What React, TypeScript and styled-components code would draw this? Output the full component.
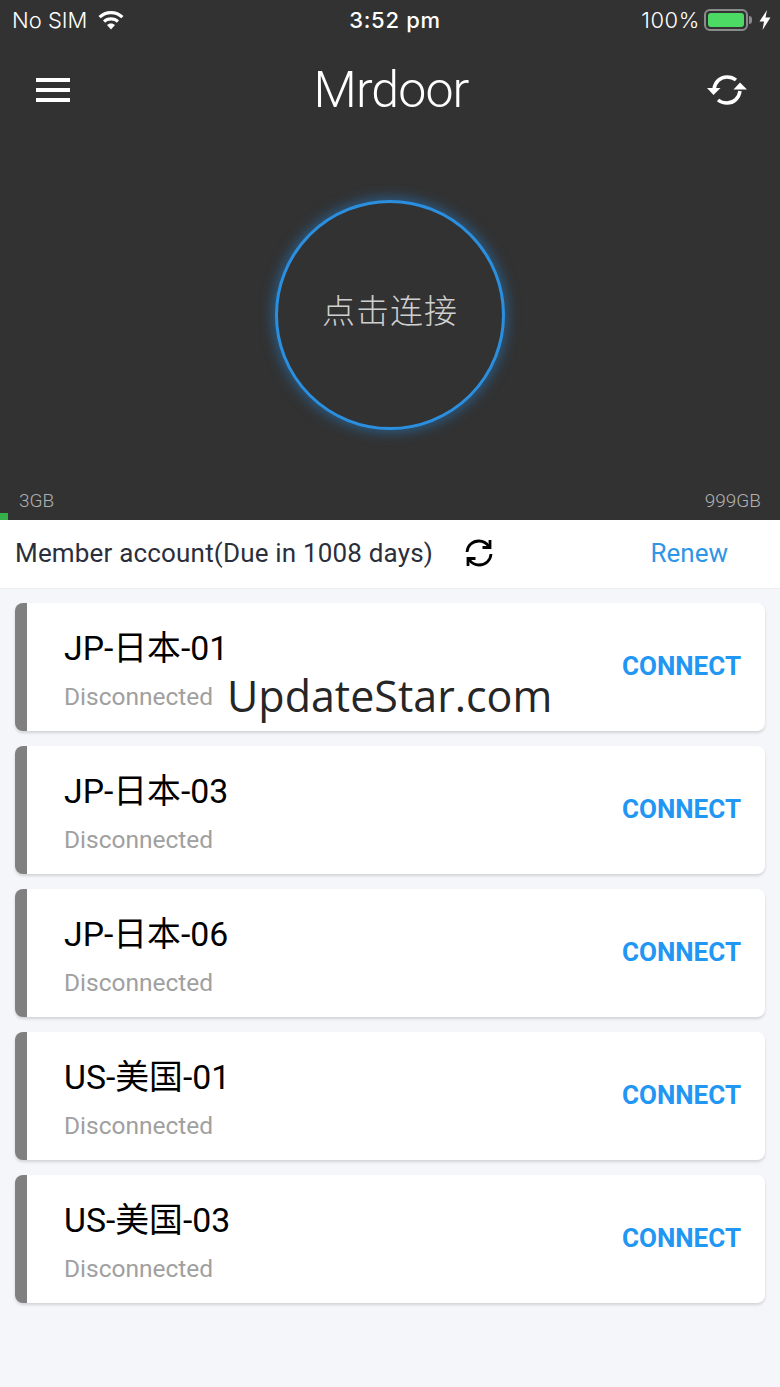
import React from "react";
import styled, { createGlobalStyle } from "styled-components";

const Global = createGlobalStyle`
  html, body { margin: 0; padding: 0; background: #f5f6fa; }
  body { font-family: Roboto, "Noto Sans CJK SC", sans-serif; }
  * { box-sizing: border-box; }
`;

const Page = styled.div`
  position: relative;
  width: 780px;
  height: 1387px;
  overflow: hidden;
  background: #f5f6fa;
  display: flex;
  flex-direction: column;
`;

const Hero = styled.header`
  position: relative;
  height: 520px;
  background: #323232;
  display: flex;
  flex-direction: column;
`;

const StatusBar = styled.div`
  height: 40px;
  padding: 0 9px 0 12px;
  display: grid;
  grid-template-columns: 1fr auto 1fr;
  align-items: center;
  color: #fff;
  font-family: Inter, sans-serif;
  font-size: 22px;
  font-weight: 300;
`;

const StatusLeft = styled.div`
  display: flex;
  align-items: center;
  gap: 11px;
`;

const StatusRight = styled.div`
  display: flex;
  align-items: center;
  justify-content: flex-end;
  gap: 4px;
  letter-spacing: 0.6px;
`;

const Clock = styled.div`
  margin-left: 7px;
  font-weight: 500;
  letter-spacing: 0.7px;
`;

const Battery = styled.div`
  position: relative;
  width: 44px;
  height: 22px;
  border: 2px solid #8b8b8b;
  border-radius: 6px;
  padding: 2px;
  &::after {
    content: "";
    position: absolute;
    right: -6px;
    top: 5px;
    width: 3px;
    height: 8px;
    border-radius: 0 3px 3px 0;
    background: #8b8b8b;
  }
`;

const BatteryFill = styled.div`
  width: 100%;
  height: 100%;
  background: #4cd964;
  border-radius: 3px;
`;

const Bolt = styled.svg`
  margin-left: 7px;
`;

const NavBar = styled.div`
  height: 100px;
  padding: 0 33px 0 36px;
  display: flex;
  align-items: center;
  justify-content: space-between;
`;

const Logo = styled.div`
  margin-left: 5px;
  color: #fff;
  font-family: Roboto, sans-serif;
  font-weight: 300;
  font-size: 50px;
  letter-spacing: -0.9px;
  line-height: 1;
`;

const Burger = styled.div`
  width: 34px;
  display: flex;
  flex-direction: column;
  gap: 6px;
`;

const BurgerLine = styled.span`
  display: block;
  height: 4px;
  background: #fff;
`;

const DialArea = styled.div`
  flex: 1;
  display: flex;
  justify-content: center;
  padding-top: 60px;
`;

const Dial = styled.button`
  width: 230px;
  height: 230px;
  border-radius: 50%;
  border: 3px solid #2b8fe0;
  background: #323232;
  box-shadow: 0 0 13px 2px rgba(33, 140, 230, 0.5);
  color: #cfcfcf;
  font-family: "Noto Sans CJK SC", sans-serif;
  font-weight: 300;
  font-size: 33px;
  letter-spacing: 1px;
  padding: 0 0 12px;
`;

const QuotaRow = styled.div`
  position: absolute;
  left: 19px;
  right: 19px;
  bottom: 9px;
  display: flex;
  justify-content: space-between;
  color: #b0b0b0;
  font-size: 19px;
  font-weight: 300;
  line-height: 20px;
`;

const QuotaBar = styled.div`
  position: absolute;
  left: 0;
  bottom: 0;
  height: 7px;
  background: #35b14a;
`;

const AccountBar = styled.div`
  height: 69px;
  background: #fff;
  border-bottom: 1px solid #eceef2;
  padding: 0 52px 3px 16px;
  display: flex;
  align-items: center;
  color: #2b2f3b;
  font-size: 26px;
`;

const AccountText = styled.span`
  letter-spacing: 0.18px;
  margin-left: -1px;
`;

const RefreshSmall = styled.span`
  margin-left: 31px;
  display: flex;
`;

const Renew = styled.a`
  margin-left: auto;
  color: #2f96e6;
  font-size: 26px;
`;

const List = styled.div`
  padding: 14px 15px;
  display: flex;
  flex-direction: column;
  gap: 15px;
`;

const Card = styled.div`
  height: 128px;
  background: #fff;
  border-radius: 8px;
  border-left: 12px solid #808080;
  box-shadow: 0 2px 3px rgba(0, 0, 0, 0.14);
  padding: 0 24px 0 37px;
  display: flex;
  align-items: center;
  justify-content: space-between;
`;

const CardInfo = styled.div`
  display: flex;
  flex-direction: column;
  gap: 12px;
  padding-top: 6px;
`;

const CardName = styled.div`
  color: #000;
  font-family: Roboto, "Noto Sans CJK SC", sans-serif;
  font-size: 33.800px;
  line-height: 42px;
`;

const CardStatus = styled.div`
  color: #a0a0a0;
  font-size: 24.500px;
  line-height: 30px;
`;

const ConnectButton = styled.button`
  border: 0;
  background: none;
  padding: 0 0 2px;
  color: #2196f3;
  font-family: Roboto, sans-serif;
  font-weight: 700;
  font-size: 26px;
`;

const Watermark = styled.div`
  position: absolute;
  left: 227px;
  top: 666px;
  color: #262626;
  font-family: "Open Sans", sans-serif;
  font-size: 43px;
  line-height: 60px;
`;

const servers = ["JP-日本-01", "JP-日本-03", "JP-日本-06", "US-美国-01", "US-美国-03"];

export default function App() {
  return (
    <Page>
      <Global />
      <Hero>
        <StatusBar>
          <StatusLeft>
            No SIM
            <svg width="26" height="19" viewBox="0 0 26 19" fill="#fff">
              <path d="M13 0C8 0 3.800 1.900 0.500 5L2.700 7.300C5.400 4.800 9 3.200 13 3.200S20.600 4.800 23.300 7.300L25.500 5C22.200 1.900 18 0 13 0Z" />
              <path d="M13 6.300C9.900 6.300 7.100 7.500 5 9.500L7.200 11.800C8.700 10.400 10.700 9.500 13 9.500S17.300 10.400 18.800 11.800L21 9.500C18.900 7.500 16.100 6.300 13 6.300Z" />
              <path d="M13 12.500C11.400 12.500 10 13.100 9 14.100L13 18.500L17 14.100C16 13.100 14.600 12.500 13 12.500Z" />
            </svg>
          </StatusLeft>
          <Clock>3:52 pm</Clock>
          <StatusRight>
            100%
            <Battery>
              <BatteryFill />
            </Battery>
            <Bolt width="12" height="20" viewBox="0 0 12 20" fill="#fff">
              <path d="M8 0L0.500 11.500H5L3.500 20L11.500 7.500H6.500Z" />
            </Bolt>
          </StatusRight>
        </StatusBar>
        <NavBar>
          <Burger>
            <BurgerLine />
            <BurgerLine />
            <BurgerLine />
          </Burger>
          <Logo>Mrdoor</Logo>
          <svg width="40" height="32" viewBox="0 0 40 32" fill="none">
            <path d="M7 15C8 8 13 3 20 3C24 3 26.500 4 29 6" stroke="#fff" strokeWidth="3.500" />
            <path d="M33 17C32 24 27 29 20 29C16 29 13.500 28 11 26" stroke="#fff" strokeWidth="3.500" />
            <path d="M0 14H13.500L6.500 21Z" fill="#fff" />
            <path d="M26.500 15.500H40L33 8.500Z" fill="#fff" />
          </svg>
        </NavBar>
        <DialArea>
          <Dial>点击连接</Dial>
        </DialArea>
        <QuotaRow>
          <span>3GB</span>
          <span>999GB</span>
        </QuotaRow>
        <QuotaBar style={{ width: 8 }} />
      </Hero>
      <AccountBar>
        <AccountText>Member account(Due in 1008 days)</AccountText>
        <RefreshSmall>
          <svg width="30" height="30" viewBox="0 0 30 30" fill="none" stroke="#000" strokeWidth="2.800">
            <path d="M3 14C3.500 7.500 8.500 3 15 3C19 3 22.500 5 25 8.500" />
            <path d="M27 16C26.500 22.500 21.500 27 15 27C11 27 7.500 25 5 21.500" />
            <path d="M26 2V9.500H18.500" />
            <path d="M4 28V20.500H11.500" />
          </svg>
        </RefreshSmall>
        <Renew>Renew</Renew>
      </AccountBar>
      <List>
        {servers.map((name) => (
          <Card key={name}>
            <CardInfo>
              <CardName>{name}</CardName>
              <CardStatus>Disconnected</CardStatus>
            </CardInfo>
            <ConnectButton>CONNECT</ConnectButton>
          </Card>
        ))}
      </List>
      <Watermark>UpdateStar.com</Watermark>
    </Page>
  );
}
